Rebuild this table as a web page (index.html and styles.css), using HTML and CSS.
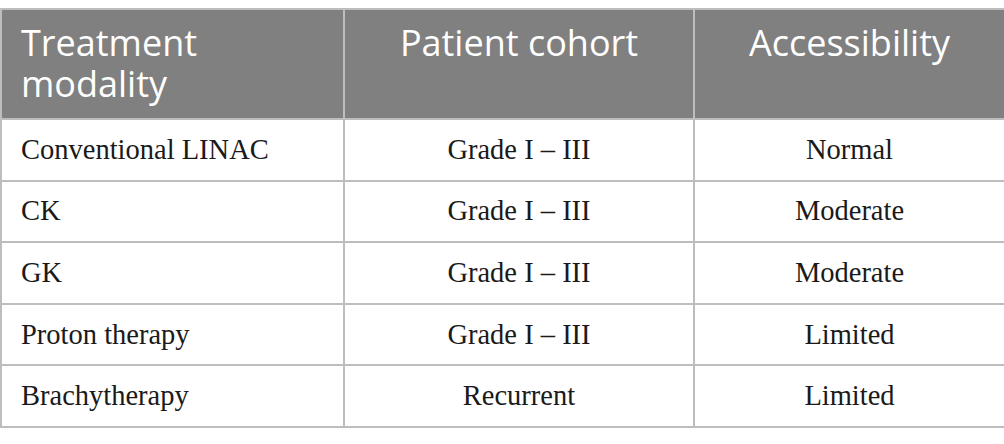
FILE: index.html
```html
<!DOCTYPE html>
<html>
<head>
<meta charset="utf-8">
<link rel="stylesheet" href="styles.css">
</head>
<body>
<table class="tbl">
  <colgroup>
    <col class="c1"><col class="c2"><col class="c3">
  </colgroup>
  <thead>
    <tr>
      <th class="left">Treatment modality</th>
      <th>Patient cohort</th>
      <th>Accessibility</th>
    </tr>
  </thead>
  <tbody>
    <tr><td class="left">Conventional LINAC</td><td>Grade I – III</td><td>Normal</td></tr>
    <tr><td class="left">CK</td><td>Grade I – III</td><td>Moderate</td></tr>
    <tr><td class="left">GK</td><td>Grade I – III</td><td>Moderate</td></tr>
    <tr><td class="left">Proton therapy</td><td>Grade I – III</td><td>Limited</td></tr>
    <tr><td class="left">Brachytherapy</td><td>Recurrent</td><td>Limited</td></tr>
  </tbody>
</table>
</body>
</html>
```
FILE: styles.css
```css
html, body {
  margin: 0;
  padding: 0;
  background: #ffffff;
}
body {
  padding-top: 8px;
}
.tbl {
  width: 1004px;
  border-collapse: collapse;
  table-layout: fixed;
}
.c1 { width: 343px; }
.c2 { width: 350px; }
.c3 { width: 311px; }
.tbl th, .tbl td {
  border: 2px solid #bdbdbd;
  text-align: center;
}
.tbl th {
  background: #808080;
  color: #ffffff;
  font-family: "Open Sans", sans-serif;
  font-weight: 400;
  font-size: 36px;
  line-height: 41px;
  height: 110px;
  box-sizing: border-box;
  vertical-align: top;
  padding: 12px 19px 0 19px;
}
.tbl td {
  font-family: "Liberation Serif", serif;
  font-size: 28.5px;
  color: #1a1a1a;
  height: 61.6px;
  box-sizing: border-box;
  padding: 0 19px 0 19px;
  vertical-align: middle;
}
.tbl .left {
  text-align: left;
}
```
